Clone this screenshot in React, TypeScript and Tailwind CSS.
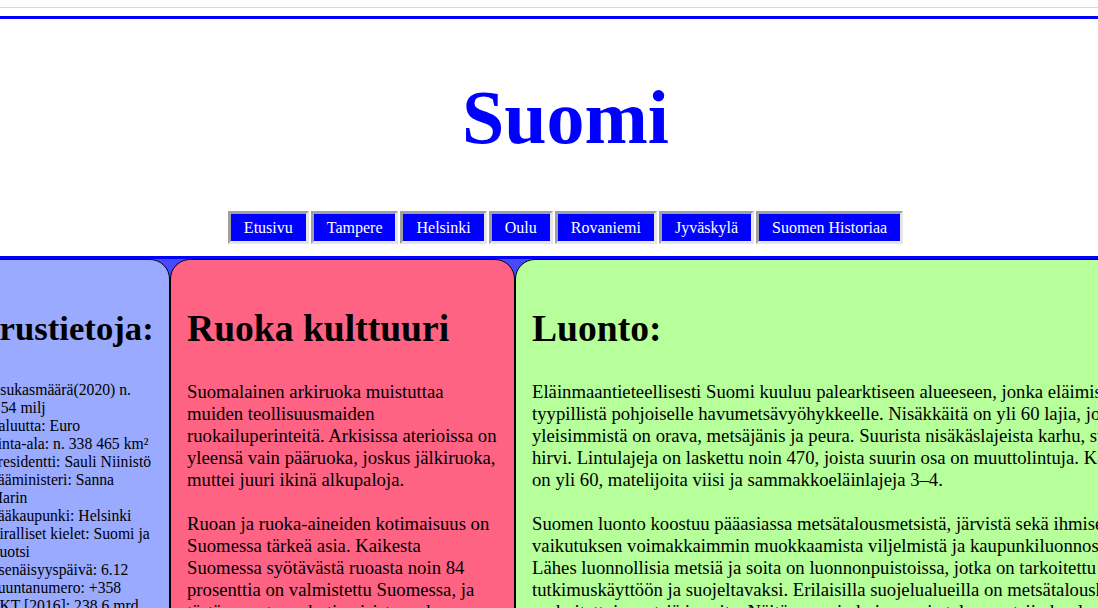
import React from 'react';

const links = ['Etusivu', 'Tampere', 'Helsinki', 'Oulu', 'Rovaniemi', 'Jyväskylä', 'Suomen Historiaa'];

const facts = [
  'Asukasmäärä(2020) n. 5.54 milj',
  'Valuutta: Euro',
  'Pinta-ala: n. 338 465 km²',
  'Presidentti: Sauli Niinistö',
  'Pääministeri: Sanna Marin',
  'Pääkaupunki: Helsinki',
  'Viralliset kielet: Suomi ja Ruotsi',
  'Itsenäisyyspäivä: 6.12',
  'Suuntanumero: +358',
  'BKT [2016]: 238,6 mrd. $',
  'Aikavyöhyke: UTC+2',
];

const App = () => {
  return (
    <div className="w-full h-[608px] overflow-hidden bg-white font-['Liberation_Serif',serif] text-black">
      <div className="w-[1131px]">
        {/* top rules */}
        <div className="pt-[7px]">
          <div className="h-[9px] border-t border-[#d9d9d9]" />
        </div>
        <header className="border-t-[3px] border-[#0000ff] pt-[55px] pb-[12px]">
          <h1 className="text-center text-[76px] leading-[86px] font-bold text-[#0000ff]">Suomi</h1>
          <nav className="mt-[51px] flex justify-center gap-[2px]">
            {links.map((link) => (
              <a
                key={link}
                href="#"
                className="h-[33px] px-[13px] flex items-center bg-[#0000ff] text-white text-[16px] leading-[normal] border-[3px] border-t-[#a0a0a0] border-l-[#a0a0a0] border-r-[#e6e6e6] border-b-[#e6e6e6]"
              >
                {link}
              </a>
            ))}
          </nav>
        </header>

        <main className="-ml-[57px] flex items-stretch border-t-[3px] border-[#0000ff] bg-[#4848ff] h-[400px]">
          <section className="shrink-0 w-[227px] p-[16px] border border-black rounded-t-[20px] bg-[#99aaff]">
            <h2 className="mt-[33px] mb-[32px] ml-[3px] text-[34.7px] leading-[normal] font-bold whitespace-nowrap">Perustietoja:</h2>
            <ul className="pl-[29px] -mr-[1px] list-none text-[15.7px] leading-[18px]">
              {facts.map((fact) => (
                <li key={fact}>{fact}</li>
              ))}
            </ul>
          </section>

          <section className="shrink-0 w-[345px] p-[16px] border border-black rounded-t-[20px] bg-[#ff6384] text-[18.72px] leading-[22px]">
            <h2 className="mt-[31px] mb-[31px] text-[37.6px] leading-[normal] font-bold">Ruoka kulttuuri</h2>
            <p>
              Suomalainen arkiruoka muistuttaa muiden teollisuusmaiden ruokailuperinteitä. Arkisissa aterioissa on
              yleensä vain pääruoka, joskus jälkiruoka, muttei juuri ikinä alkupaloja.
            </p>
            <p className="mt-[22px]">
              Ruoan ja ruoka-aineiden kotimaisuus on Suomessa tärkeä asia. Kaikesta Suomessa syötävästä ruoasta noin 84
              prosenttia on valmistettu Suomessa, ja tästä ruoasta on kotimaisista raaka-aineista noin 78 prosenttia.
            </p>
          </section>

          <section className="shrink-0 w-[685px] p-[16px] border border-black rounded-t-[20px] bg-[#b6ff9b] text-[18.72px] leading-[22px]">
            <h2 className="mt-[31px] mb-[31px] text-[37.6px] leading-[normal] font-bold">Luonto:</h2>
            <p>
              Eläinmaantieteellisesti Suomi kuuluu palearktiseen alueeseen, jonka eläimistö on tyypillistä pohjoiselle
              havumetsävyöhykkeelle. Nisäkkäitä on yli 60 lajia, joista yleisimmistä on orava, metsäjänis ja peura.
              Suurista nisäkäslajeista karhu, susi, ilves ja hirvi. Lintulajeja on laskettu noin 470, joista suurin osa
              on muuttolintuja. Kalalajeja
              <br />
              on yli 60, matelijoita viisi ja sammakkoeläinlajeja 3–4.
            </p>
            <p className="mt-[22px]">
              Suomen luonto koostuu pääasiassa metsätalousmetsistä, järvistä sekä ihmisen vaikutuksen voimakkaimmin
              muokkaamista viljelmistä ja kaupunkiluonnosta.
              <br />
              Lähes luonnollisia metsiä ja soita on luonnonpuistoissa, jotka on tarkoitettu tutkimuskäyttöön ja
              suojeltavaksi. Erilaisilla suojelualueilla on metsätalouskäytöltä rauhoitettuja metsiä ja soita. Näitä,
              samoin kuin monia talousmetsiin kuuluvia pienialaisia elinympäristöjä, suojellaan.
            </p>
          </section>
        </main>
      </div>
    </div>
  );
};

export default App;
